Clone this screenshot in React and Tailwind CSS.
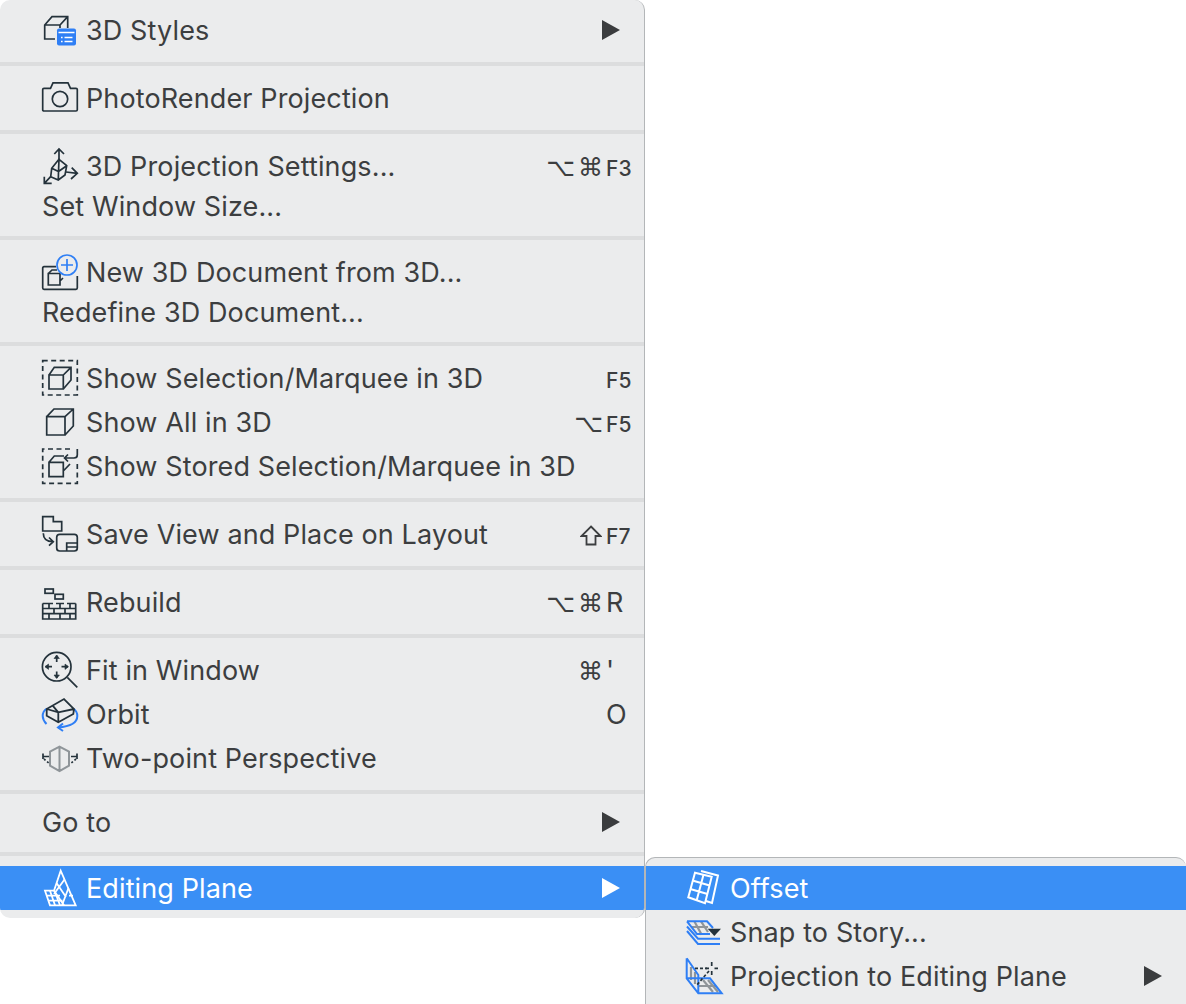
const ink = "#24323b";
const blue = "#2f7ff5";

const Svg = ({ children, hi, w = "1.7" }) => (
  <svg width="40" height="40" viewBox="0 0 40 40" fill="none" stroke={hi ? "#fff" : ink} strokeWidth={w} className="shrink-0">
    {children}
  </svg>
);

const icons = {
  styles: (
    <Svg>
      <path d="M15 29H4.7V15L12 6.7H27.7V18M4.7 15H20V18M20 15L27.7 6.7" />
      <rect x="17" y="18.5" width="19" height="17" rx="2" fill={blue} stroke="none" />
      <path d="M21 27.5h1.6M21 31.5h1.6M24.5 27.5h8M24.5 31.5h8M18.5 22.5h16" stroke="#fff" strokeWidth="1.4" />
    </Svg>
  ),
  camera: (
    <Svg>
      <path d="M4 10.3H10.5L13 4.8H28L30.5 10.3H36Q37.3 10.3 37.3 11.6V31.7Q37.3 33 36 33H4Q2.7 33 2.7 31.7V11.6Q2.7 10.3 4 10.3Z" />
      <circle cx="20" cy="21" r="7.7" />
    </Svg>
  ),
  projection: (
    <Svg>
      <path d="M19 13V3M14.3 8L19 3L24 8" />
      <path d="M19 13.3L26.7 19.7L25 29L18.3 34L10.7 30.7L11.7 22.3ZM11.7 22.3L18.5 25.5L26.7 19.7M18.5 25.5L18.3 34M19 13.3L18.5 25.5" />
      <path d="M26 26L37.3 27.3M31.7 21.7L37.3 27.3L31 33" />
      <path d="M10.7 30.7L4.3 37.3M4.3 30.7V37.3H11.7" />
    </Svg>
  ),
  newDoc: (
    <Svg>
      <path d="M16 14.7H4Q2.7 14.7 2.7 16V36Q2.7 37.3 4 37.3H36Q37.3 37.3 37.3 36V24" />
      <path d="M8.3 21.5H20V33H8.3ZM8.3 21.5L12 18H17M20 29L23 26" />
      <circle cx="27" cy="13" r="10" stroke={blue} fill="#ebeced" />
      <path d="M27 7V19M21 13H33" stroke={blue} />
    </Svg>
  ),
  selection: (
    <Svg>
      <rect x="2.7" y="2.7" width="34.6" height="34.3" strokeDasharray="5 3.5" />
      <path d="M9 17H23.3V31H9ZM9 17L14.3 9.3H31V22L23.3 31M23.3 17L31 9.3" />
    </Svg>
  ),
  all: (
    <Svg>
      <path d="M6.7 14.7H25V33H6.7ZM6.7 14.7L14 7H33.3V24L25 33M25 14.7L33.3 7" />
    </Svg>
  ),
  stored: (
    <Svg>
      <path d="M30 3H2.7V37.3H37.3V16" strokeDasharray="5 3.5" />
      <path d="M9 16.3H23.3V30.7H9ZM9 16.3L14.3 10H24M23.3 25L30 18" />
      <path d="M37.3 3V9Q37.3 12 34 12H24.5M28 8.5L24.5 12L28 15.5" />
    </Svg>
  ),
  save: (
    <Svg>
      <path d="M2.7 2.7H13.3V7.7H21.7V17H2.7Z" />
      <rect x="16.7" y="20.3" width="20.6" height="16.7" rx="3" />
      <path d="M26.7 37V29H37.3M27 33H37" />
      <path d="M3.3 19.3Q3.3 27.7 13 27.7M9 23.5L13.3 27.7L9 31.7" />
    </Svg>
  ),
  rebuild: (
    <Svg>
      <rect x="5" y="7" width="8.3" height="4.3" />
      <rect x="15" y="12.3" width="8.3" height="4.7" />
      <path d="M2.7 26.5H35.7M2.7 31.7H35.7M2.7 21.5V37H35.7V21.5M2.7 21.5H13M16 21.5H24M27 21.5H35.7" />
      <path d="M9 21.5V26.5M20 21.5V26.5M30 21.5V26.5M14 26.5V31.7M25 26.5V31.7M9 31.7V37M20 31.7V37M30 31.7V37" />
    </Svg>
  ),
  fit: (
    <Svg>
      <circle cx="16.7" cy="16.7" r="14.3" />
      <path d="M27.3 27.3L37.3 37.3" />
      <path d="M16.7 5.5V12M16.7 21.5V28M5.5 16.7H12M21.5 16.7H28" />
      <path d="M14 8.5L16.7 5L19.4 8.5ZM14 25L16.7 28.5L19.4 25ZM8.5 14L5 16.7L8.5 19.4ZM25 14L28.5 16.7L25 19.4Z" fill={ink} strokeWidth="0.6" />
    </Svg>
  ),
  orbit: (
    <Svg w="1.8">
      <path d="M6.5 30Q2.7 26 2.7 22Q2.7 17 7 14.5M33 14.5Q37.3 17 37.3 22Q37.3 32 18 33.5" stroke={blue} strokeWidth="2" />
      <path d="M23 29.5L18 33.5L23 37" stroke={blue} strokeWidth="2" />
      <path d="M6.7 15L24 5L34 15L33.3 20L18.3 28.3L6.7 21.7ZM6.7 15L18.3 18.3L34 15M18.3 18.3V28.3M12.7 11.7L18.3 18.3" />
    </Svg>
  ),
  twoPoint: (
    <Svg>
      <path d="M10 13.7L19.5 8.7L29 13.7V27.7L19.5 33L10 27.7ZM19.5 8.7V33" stroke="#8f9599" strokeWidth="2" />
      <path d="M3 15.5V21M37 15.5V21M3 18.5H9M31 18.5H37" />
      <path d="M4 21L10 26M36 21L30 26" strokeDasharray="2 2" />
    </Svg>
  ),
  plane: (
    <Svg hi w="1.8">
      <path d="M14 22.7L20.7 2.7L35.7 37.3H10L5 22.7Z" />
      <path d="M16.5 15L26 29M24.5 11.5L14 26M14 22.7L24 37.3M28.5 20L22 37.3" />
      <path d="M6.8 27.7H20M8.5 32.7H22.5M10 22.7L15 37.3M15 24L20 37.3M29 27.7H33" />
    </Svg>
  ),
  offset: (
    <Svg hi w="2">
      <path d="M10 4.7L26.7 8.7L20 35.3L3.3 29.3Z" />
      <path d="M16 3L33 7.5L27 35L21 33" />
      <path d="M18.5 6.7L11.7 32.3M7.5 12.5L24.7 17.5M5.3 21L22.5 26" />
    </Svg>
  ),
  snap: (
    <Svg>
      <path d="M9.3 9.3L16.7 22.7M16 9.3L23 20M6.7 15H23" stroke="#8f9599" strokeWidth="2.2" />
      <path d="M2 9.3H22L28 16M2 9.3L12 22H25M2 14.5L13 26.7H35M2 19L13 32H35" stroke={blue} strokeWidth="2" />
      <path d="M22.7 16.7H36L29.3 24Z" fill={ink} stroke="none" />
    </Svg>
  ),
  toPlane: (
    <Svg>
      <path d="M6 11V24M10 16V28M18 24L28 36M23 24L33 36M14 30H31" stroke="#8f9599" strokeWidth="2.2" />
      <path d="M1.7 2.3V22.3L13.3 37.3H36.7L25 22.3H1.7M1.7 2.3L13.3 19V37.3" stroke={blue} strokeWidth="2" />
      <path d="M10 12.3H22M24 15L11 30" strokeDasharray="3 2" />
      <path d="M26.7 6V10M26.7 15V19M20.5 12.3H24M29.5 12.3H33" />
    </Svg>
  ),
};

const ShiftGlyph = () => (
  <svg width="22" height="21" viewBox="0 0 22 21" fill="none" stroke="#3c3e40" strokeWidth="1.8" className="mr-1">
    <path d="M11 1.5L20.5 11H15.5V19.5H6.5V11H1.5Z" />
  </svg>
);

const Arrow = ({ hi }) => (
  <svg width="18" height="20" viewBox="0 0 18 20" className="shrink-0">
    <polygon points="0,0 18,10 0,20" fill={hi ? "#fff" : "#3a3c3e"} />
  </svg>
);

const Row = ({ icon, label, mods, keyLabel, small, arrow, hi, sub, h = "h-11", arrowGap = "pr-6" }) => (
  <div className={`flex items-center ${h} ${hi ? "bg-[#3a8ff5] text-white" : "text-[#3c3e40]"}`}>
    {icon ? (
      <div className={`flex ${sub ? "ml-[39px] mr-[5px]" : "ml-[40px] mr-[6px]"}`}>{icon}</div>
    ) : (
      <div className="ml-[42px]" />
    )}
    <span className="flex-1 whitespace-nowrap pt-0.5">{label}</span>
    {mods && (
      <span className="font-['DejaVu_Sans',sans-serif] text-[25px] font-medium tracking-[3px] pt-[3px]">{mods}</span>
    )}
    {keyLabel && (
      <span className={`w-[38px] ${small ? "text-[21px] font-medium pt-[6px]" : "pt-0.5"}`}>{keyLabel}</span>
    )}
    {arrow && <div className={arrowGap}><Arrow hi={hi} /></div>}
  </div>
);

const Sep = () => <div className="h-1 bg-[#dcddde]" />;

export default function App() {
  return (
    <div className="flex items-start h-[1004px] overflow-hidden bg-white font-['Inter',sans-serif] text-[27px] tracking-[0.12px]">
      <div className="w-[645px] shrink-0 h-[918px] bg-[#ebeced] border-r border-[#b3b6b8] rounded-[10px] overflow-hidden">
        <div className="pt-2 pb-2.5">
          <Row icon={icons.styles} label="3D Styles" arrow />
        </div>
        <Sep />
        <div className="py-2.5">
          <Row icon={icons.camera} label="PhotoRender Projection" />
        </div>
        <Sep />
        <div className="pt-3 pb-2.5">
          <Row icon={icons.projection} label="3D Projection Settings..." mods="⌥⌘" keyLabel="F3" small h="h-10" />
          <Row label="Set Window Size..." h="h-10" />
        </div>
        <Sep />
        <div className="pt-3 pb-2.5">
          <Row icon={icons.newDoc} label="New 3D Document from 3D..." h="h-10" />
          <Row label="Redefine 3D Document..." h="h-10" />
        </div>
        <Sep />
        <div className="py-2.5">
          <Row icon={icons.selection} label="Show Selection/Marquee in 3D" keyLabel="F5" small />
          <Row icon={icons.all} label="Show All in 3D" mods="⌥" keyLabel="F5" small />
          <Row icon={icons.stored} label="Show Stored Selection/Marquee in 3D" />
        </div>
        <Sep />
        <div className="py-2.5">
          <Row icon={icons.save} label="Save View and Place on Layout" mods={<ShiftGlyph />} keyLabel="F7" small />
        </div>
        <Sep />
        <div className="py-2.5">
          <Row icon={icons.rebuild} label="Rebuild" mods="⌥⌘" keyLabel="R" />
        </div>
        <Sep />
        <div className="py-2.5">
          <Row icon={icons.fit} label="Fit in Window" mods="⌘" keyLabel="'" />
          <Row icon={icons.orbit} label="Orbit" keyLabel="O" />
          <Row icon={icons.twoPoint} label="Two-point Perspective" />
        </div>
        <Sep />
        <div className="pt-1.5 pb-2">
          <Row label="Go to" arrow />
        </div>
        <Sep />
        <div className="pt-2.5 pb-2">
          <Row icon={icons.plane} label="Editing Plane" arrow hi />
        </div>
      </div>
      <div className="flex-1 mt-[857px] h-[160px] bg-[#ebeced] border-t border-l border-[#b3b6b8] rounded-t-[10px] pt-2">
        <Row icon={icons.offset} label="Offset" hi sub />
        <Row icon={icons.snap} label="Snap to Story..." sub />
        <Row icon={icons.toPlane} label="Projection to Editing Plane" arrow sub />
      </div>
    </div>
  );
}
